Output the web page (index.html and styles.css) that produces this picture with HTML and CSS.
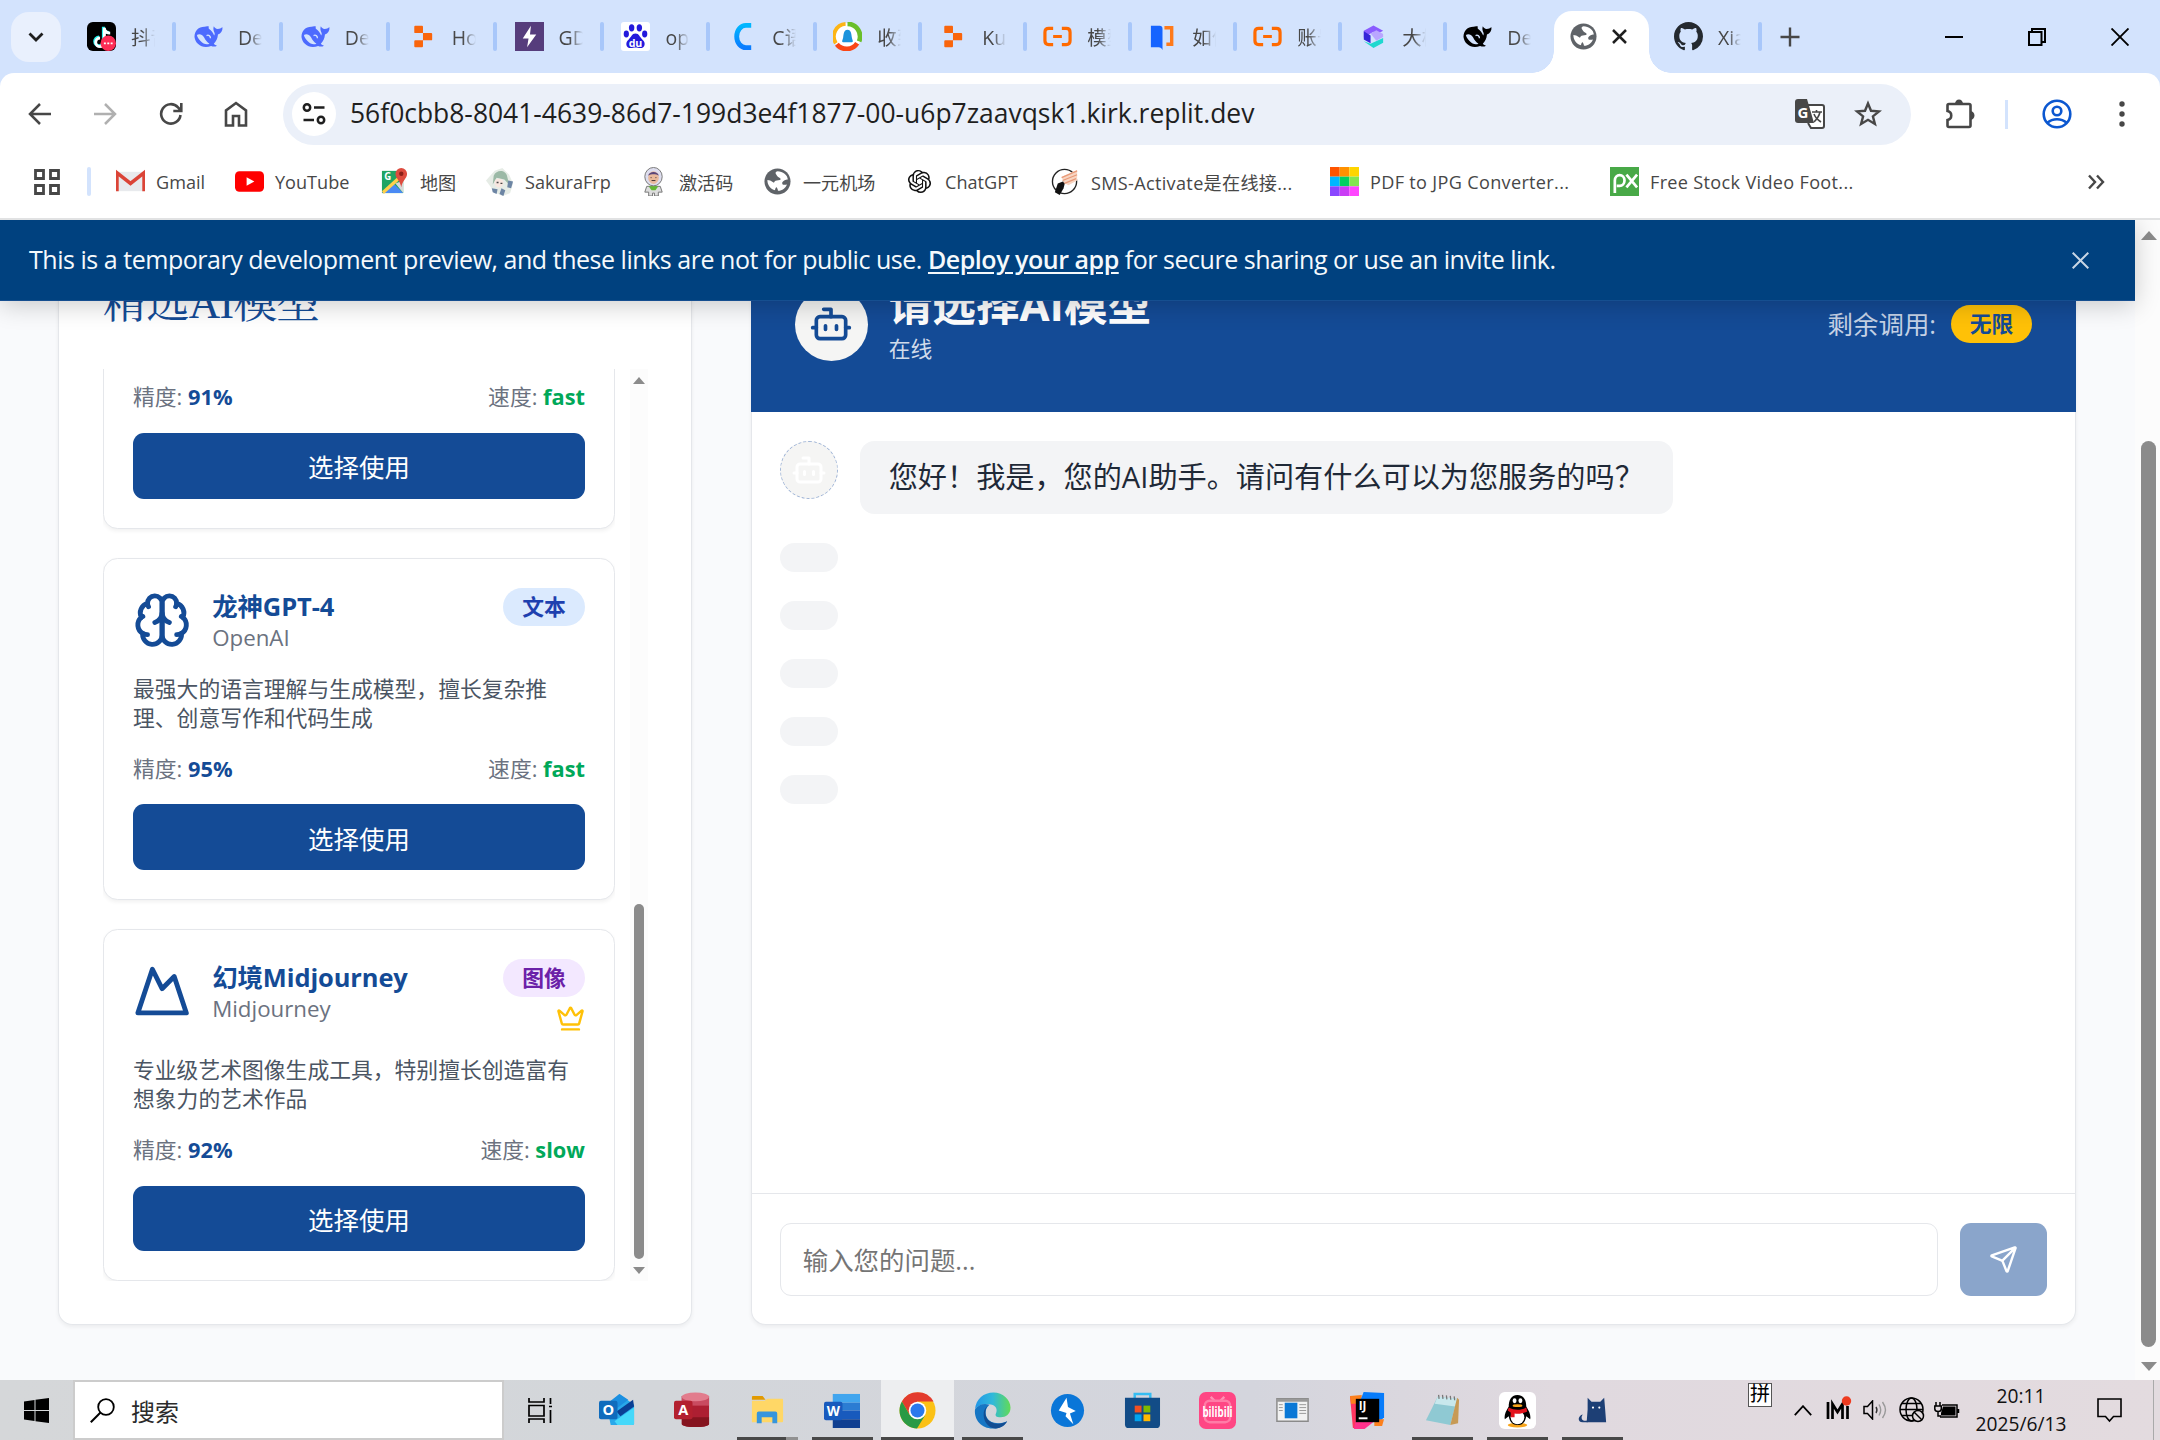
FILE: index.html
```html
<!DOCTYPE html>
<html lang="zh-CN">
<head>
<meta charset="utf-8">
<title>AI模型</title>
<link rel="stylesheet" href="styles.css">
</head>
<body>
<svg class="defs" aria-hidden="true">
  <defs>
    <symbol id="whale" viewBox="0 0 30 30"><path d="M.5 15.500C.5 9 5 4.800 11 5c1.500-.8 3.500-.8 4.500-.2-.5.700-.5 1.700.2 2.400 2.300 1.500 4 3.800 5.200 6.800.8-1.500.7-2.500-.2-4C19.800 8 20 6 20.500 4.500c.7 1.500 2 2.700 4 2.700 2 0 3.500-.8 5-1.700.2 3.500-1.500 6.500-4.700 7.500-.5 4.500-1.800 7-4.300 9.500 1 1.200 2 1.500 3.200 2-1.700 1.200-4.200 1-6 .2C9 28 1.500 23 .5 15.500z" fill="currentColor"/><path d="M3 13.500c2.500-1.800 5.500-.5 7.500 2.500 1.500 2.700 3 5 5.500 6.500-3 1.500-6.500.2-9-2.500C5 18 3.500 16 3 13.500z" fill="#d3e3fd"/><path d="M13 14c2-1 4 .3 4 2.800" fill="none" stroke="#d3e3fd" stroke-width="1.400"/></symbol>
    <symbol id="replit" viewBox="0 0 30 30"><path d="M7.500 4h7q1 0 1 1v6.500h-8q-1 0-1-1V5q0-1 1-1zM15.500 11.500H24q1 0 1 1V18q0 1-1 1h-8.500zM7.500 19h8v6q0 1-1 1h-7q-1 0-1-1v-5q0-1 1-1z" fill="#f9650c"/></symbol>
    <symbol id="bracket" viewBox="0 0 30 30"><path d="M10.500 6.500H6Q2 6.500 2 10.500v9q0 4 4 4h4.500M19.500 6.500H24q4 0 4 4v9q0 4-4 4h-4.500M10.500 15h9" fill="none" stroke="#ff6a00" stroke-width="3.300"/></symbol>
    <symbol id="globe" viewBox="0 0 28 28"><circle cx="14" cy="14" r="13.500" fill="#5f6368"/><path d="M14 3.300c2.200.7 2.500 1.700 1.500 3.200s-1.500 2.700-3.500 3.500c-1.500.7-1.500 2-.5 2.500 2 .7 4.500 0 5.500 1.500s1.500 4-.5 5-2.500 2-3 4.500c-4 .2-8-2.500-9.300-6.500 1.800.5 4 .7 4.800-.5.500-1.500-.5-2.500-2-3.500-1.500-.8-2.500-1-3.700-1C3.500 7 8.500 3.500 14 3.300z" fill="#fff" transform="matrix(-1 0 0 1 28 0)"/><path d="M3.500 12.500c2 .2 4 .8 5.500 2 2 1.500 5 .5 5 3 0 2-2.500 2.500-2.500 5.500C7 22 3.500 18 3.500 12.500z" fill="#fff"/></symbol>
    <symbol id="bot" viewBox="0 0 24 24"><g fill="none" stroke="currentColor" stroke-width="2" stroke-linecap="round" stroke-linejoin="round"><path d="M12 8V4H8M2 14h2M20 14h2M15 13v2M9 13v2"/><rect x="4" y="8" width="16" height="12" rx="2"/></g></symbol>
  </defs>
</svg>

<div class="browser">
  <header class="tabstrip">
    <button class="tab-search"><svg width="16" height="12" viewBox="0 0 16 12"><path d="M1.500 2.500 8 9l6.500-6.500" fill="none" stroke="#1f1f1f" stroke-width="2.800"/></svg></button>
    <div class="tabs">
      <div class="tab"><svg class="fav" viewBox="0 0 30 30"><rect width="30" height="30" rx="6" fill="#000"/><path d="M17 5v15a4.500 4.500 0 1 1-4.500-4.500M17 6c.5 3 2.500 5 6 5" fill="none" stroke="#25f4ee" stroke-width="3.200"/><path d="M18 6v15a4.500 4.500 0 1 1-4.500-4.500M18 7c.5 3 2.500 4.500 6 4.500" fill="none" stroke="#fff" stroke-width="3"/><circle cx="22" cy="22" r="8" fill="#fe2c55"/><path d="M17.500 22h2M21 22h2M24.500 22h2" stroke="#fff" stroke-width="1.800"/></svg><span class="tab-name">抖音</span></div>
      <div class="tab"><svg class="fav blue-whale"><use href="#whale"/></svg><span class="tab-name">Dee</span></div>
      <div class="tab"><svg class="fav blue-whale"><use href="#whale"/></svg><span class="tab-name">Dee</span></div>
      <div class="tab"><svg class="fav"><use href="#replit"/></svg><span class="tab-name">Hom</span></div>
      <div class="tab"><svg class="fav" viewBox="0 0 30 30"><rect width="30" height="30" fill="#563d7c"/><path d="M16.500 4 8 17h6l-1.500 9L22 13h-6.500z" fill="#fff"/></svg><span class="tab-name">GDP</span></div>
      <div class="tab"><svg class="fav" viewBox="0 0 30 30"><rect width="30" height="30" rx="3" fill="#fff"/><g fill="#2319dc"><ellipse cx="5.500" cy="12.500" rx="2.700" ry="3.600"/><ellipse cx="11" cy="6" rx="2.800" ry="3.800"/><ellipse cx="19" cy="6" rx="2.800" ry="3.800"/><ellipse cx="24.500" cy="12.500" rx="2.700" ry="3.600"/><path d="M15 12c4 0 4 3.500 7 6 4 3 3 9-2 9-2 0-3-.5-5-.5s-3 .5-5 .5c-5 0-6-6-2-9 3-2.500 3-6 7-6z"/></g><text x="15" y="25.500" font-size="11" text-anchor="middle" class="icon-text" fill="#fff">du</text></svg><span class="tab-name">ope</span></div>
      <div class="tab"><svg class="fav" viewBox="0 0 30 30"><defs><linearGradient id="cg" x2="0" y2="1"><stop stop-color="#00b7ff"/><stop offset="1" stop-color="#0a7cff"/></linearGradient></defs><path d="M24 3.500h-5.500a9.500 11.500 0 0 0 0 23H24" fill="none" stroke="url(#cg)" stroke-width="5"/></svg><span class="tab-name">C语言</span></div>
      <div class="tab"><svg class="fav" viewBox="0 0 30 30"><circle cx="15" cy="15" r="14" fill="#fff"/><path d="M13 2A13 13 0 0 0 3 22" fill="none" stroke="#fdb515" stroke-width="4"/><path d="M15 2a13 13 0 0 1 12 18" fill="none" stroke="#6abf2a" stroke-width="5"/><path d="M4 23a13 13 0 0 0 21-1" fill="none" stroke="#fa4616" stroke-width="5"/><path d="M15 8c4 0 4 5 4.500 8s2.500 5-1 5h-7c-3.500 0-1.500-2-1-5S11 8 15 8z" fill="#1c93dc"/></svg><span class="tab-name">收到</span></div>
      <div class="tab"><svg class="fav"><use href="#replit"/></svg><span class="tab-name">Kun</span></div>
      <div class="tab"><svg class="fav"><use href="#bracket"/></svg><span class="tab-name">模型</span></div>
      <div class="tab"><svg class="fav" viewBox="0 0 30 30"><path d="M3 4h9q3 0 3 3v22q-1-3-4-3H3z" fill="#1664ff"/><path d="M17 6h7.500v17H19" fill="none" stroke="#ff7a1a" stroke-width="3.500"/></svg><span class="tab-name">如何</span></div>
      <div class="tab"><svg class="fav"><use href="#bracket"/></svg><span class="tab-name">账号</span></div>
      <div class="tab"><svg class="fav" viewBox="0 0 30 30"><path d="M16 3.500 26 9l-7 4-3-3-10 6V9z" fill="#8a5cff"/><path d="M6 9.500 13 14v8l-7-4z" fill="#3426d8"/><path d="m13 12 6-3.500 7 4v3l-7 4z" fill="#b9a6ff"/><path d="m6 20 7 2.500 13-6v5L16 27z" fill="#1fd8cf"/></svg><span class="tab-name">大模</span></div>
      <div class="tab no-sep"><svg class="fav black-whale"><use href="#whale"/></svg><span class="tab-name">Dee</span></div>
    </div>
    <div class="tab-active"><svg width="27" height="27"><use href="#globe"/></svg><svg width="15" height="15" viewBox="0 0 15 15"><path d="m1 1 13 13M14 1 1 14" stroke="#1f1f1f" stroke-width="2.500"/></svg></div>
    <div class="tab tab-last"><svg class="fav" viewBox="0 0 16 16"><path fill="#24292f" d="M8 0C3.580 0 0 3.580 0 8c0 3.540 2.290 6.530 5.470 7.590.4.070.55-.17.55-.38 0-.19-.01-.82-.01-1.490-2.010.37-2.530-.49-2.690-.94-.09-.23-.48-.94-.82-1.130-.28-.15-.68-.52-.01-.53.63-.01 1.080.58 1.230.82.72 1.210 1.870.87 2.330.66.07-.52.28-.87.51-1.070-1.780-.2-3.640-.89-3.640-3.950 0-.87.31-1.590.82-2.150-.08-.2-.36-1.020.08-2.120 0 0 .67-.21 2.200.82.64-.18 1.320-.27 2-.27s1.360.09 2 .27c1.530-1.040 2.200-.82 2.200-.82.44 1.100.16 1.920.08 2.120.51.56.82 1.270.82 2.150 0 3.070-1.870 3.750-3.650 3.950.29.25.54.73.54 1.480 0 1.070-.01 1.930-.01 2.200 0 .21.15.46.55.38A8.013 8.013 0 0 0 16 8c0-4.420-3.580-8-8-8z"/></svg><span class="tab-name">Xiao</span></div>
    <svg class="new-tab" width="20" height="20" viewBox="0 0 20 20"><path d="M10 .5v19M.5 10h19" stroke="#474747" stroke-width="2.400"/></svg>
    <div class="win-controls">
      <svg width="18" height="18" viewBox="0 0 18 18"><path d="M0 9h18" stroke="#000" stroke-width="2"/></svg>
      <svg width="18" height="18" viewBox="0 0 18 18"><path d="M1 4h12.500v13H1zM4 4V1h13v13h-3.500" fill="none" stroke="#000" stroke-width="2"/></svg>
      <svg width="18" height="18" viewBox="0 0 18 18"><path d="m.5.5 17 17M17.500.5l-17 17" stroke="#000" stroke-width="1.900"/></svg>
    </div>
  </header>

  <div class="toolbar">
    <div class="nav-icons">
      <svg width="24" height="24" viewBox="0 0 24 24"><path d="M23 12H2.500M12 2 2 12l10 10" fill="none" stroke="#474747" stroke-width="2.500"/></svg>
      <svg width="24" height="24" viewBox="0 0 24 24"><path d="M1 12h20.500M12 2l10 10-10 10" fill="none" stroke="#b0b0b0" stroke-width="2.500"/></svg>
      <svg width="24" height="24" viewBox="0 0 24 24"><path d="M21.500 13A9.700 9.700 0 1 1 19 5.300L22 8.500M22.300 1v8h-8" fill="none" stroke="#474747" stroke-width="2.600"/></svg>
      <svg width="24" height="26" viewBox="0 0 24 26"><path d="M2 24.500V9.500L12 2l10 7.500v15h-7V15H9v9.500z" fill="none" stroke="#474747" stroke-width="2.600"/></svg>
    </div>
    <div class="omnibox">
      <span class="site-info"><svg width="24" height="22" viewBox="0 0 24 22"><g fill="none" stroke="#1f1f1f" stroke-width="2.500"><circle cx="5" cy="4.500" r="3.200"/><path d="M12 4.500h10.500M1.500 17H12"/><circle cx="19" cy="17" r="3.200"/></g></svg></span>
      <span class="url">56f0cbb8-8041-4639-86d7-199d3e4f1877-00-u6p7zaavqsk1.kirk.replit.dev</span>
      <svg class="translate" width="30" height="30" viewBox="0 0 30 30"><path d="M13 6h14q2 0 2 2v19q0 2-2 2H16l-3-5" fill="#fff" stroke="#474747" stroke-width="2"/><path d="M3 0h9l7 24H3q-3 0-3-3V3q0-3 3-3z" fill="#474747"/><text x="8" y="18.500" font-size="15" text-anchor="middle" class="icon-text" fill="#fff">G</text><path d="M17 13h10M21.500 11v2M25 13c-1 5-4 8-6 10M19 15c1 3 4 6 7 8" fill="none" stroke="#474747" stroke-width="1.600"/></svg>
      <svg width="28" height="28" viewBox="0 0 28 28"><path d="m14 3.500 3 7.300 8 .6-6.100 5 2 7.600-6.900-4.200L7.100 24l2-7.600-6.100-5 8-.6z" fill="none" stroke="#474747" stroke-width="2.400"/></svg>
    </div>
    <svg class="ext" width="30" height="30" viewBox="0 0 30 30"><path d="M4 5h20q1.500 0 1.500 1.500v20q0 1.500-1.500 1.500H4q-1.500 0-1.500-1.500V21c5-1 5-8 0-9V6.500Q2.500 5 4 5z" fill="none" stroke="#474747" stroke-width="2.600"/><path d="M10 5a4 4.500 0 0 1 8 0zM25 12a4.500 4.500 0 0 1 0 9z" fill="#474747"/></svg>
    <i class="tool-sep"></i>
    <svg class="profile" width="30" height="30" viewBox="0 0 30 30"><g fill="none" stroke="#0b57d0" stroke-width="2.600"><circle cx="15" cy="15" r="13.300"/><circle cx="15" cy="12" r="4.300"/><path d="M5 24c6-5 14-5 20 0"/></g></svg>
    <svg class="dots" width="6" height="26" viewBox="0 0 6 26"><g fill="#474747"><circle cx="3" cy="3" r="2.700"/><circle cx="3" cy="13" r="2.700"/><circle cx="3" cy="23" r="2.700"/></g></svg>
  </div>

  <nav class="bookmarks">
    <svg class="apps" width="26" height="26" viewBox="0 0 26 26"><path d="M1.500 1.500h8v8h-8zM16.500 1.500h8v8h-8zM1.500 16.500h8v8h-8zM16.500 16.500h8v8h-8z" fill="none" stroke="#474747" stroke-width="2.800"/></svg>
    <i class="bm-sep"></i>
    <div class="bm w119"><svg viewBox="0 0 30 30"><path d="M1 5h28v20H1z" fill="#e8eaed"/><path d="M1 25V6l14 11L29 6v19" fill="none" stroke="#db4437" stroke-width="3.600"/></svg><span>Gmail</span></div>
    <div class="bm w145"><svg viewBox="0 0 30 30"><rect y="4.500" width="30" height="21" rx="4.500" fill="red"/><path d="m12 10.500 8 4.500-8 4.500z" fill="#fff"/></svg><span>YouTube</span></div>
    <div class="bm w105"><svg viewBox="0 0 30 30"><path d="M2 4h22v23H2z" fill="#1fa463"/><path d="m2 27 11-11 11 11z" fill="#4a8af4"/><path d="m2 25 20-18 3 2L4 28z" fill="#ffd04b"/><path d="m24 14-8 3 8 10z" fill="#d8d8d8"/><path d="M22 1a6 6 0 0 1 6 6c0 5-5 7-6 14-1-7-6-9-6-14a6 6 0 0 1 6-6z" fill="#dd4b3e"/><circle cx="22" cy="7" r="2.300" fill="#8c2018"/><text x="8" y="13" font-size="10" text-anchor="middle" class="icon-text" fill="#fff">G</text></svg><span>地图</span></div>
    <div class="bm w156"><svg viewBox="0 0 30 30"><path d="M1 14 10 4l8-3 7 7 4 9-3 10-8 3-8-4z" fill="#e6ece6"/><path d="M9 9c3-7 13-6 14 1l2 8-5-5-8-2-4 7z" fill="#9bb9a6"/><path d="M11 13c4-2 8 0 8 3s-3 6-6 5-4-6-2-8z" fill="#f8e6df"/><path d="m7 22 6 1-1 5-4-2zM24 14l5 1-2 7-4-1zM17 22l4 2-2 6-4-2z" fill="#6d85a4"/><path d="M12 16h2M16 17h2" stroke="#444" stroke-width="1.400"/></svg><span>SakuraFrp</span></div>
    <div class="bm w124"><svg viewBox="0 0 30 30"><ellipse cx="15" cy="10" rx="9" ry="9.500" fill="#dde" stroke="#777"/><ellipse cx="15" cy="11" rx="5.500" ry="6.500" fill="#e9b99c"/><path d="M9.500 9c1-5 10-5 11 0-3-2-8-2-11 0z" fill="#58457b"/><path d="M8 20h14l2 6h-4v4h-4v-3h-2v3h-4v-4H6z" fill="#ddd" stroke="#777"/><path d="M10 20h10l-3 4h-4z" fill="#63b832"/><path d="M12 11h1M17 11h1M13 14h4" stroke="#433"/></svg><span>激活码</span></div>
    <div class="bm w141"><svg class="pad"><use href="#globe"/></svg><span>一元机场</span></div>
    <div class="bm w146"><svg viewBox="-3 -3 30 30"><path fill="#111" d="M22.282 9.821a5.985 5.985 0 0 0-.516-4.910 6.046 6.046 0 0 0-6.510-2.900A6.065 6.065 0 0 0 4.981 4.182a5.985 5.985 0 0 0-3.998 2.900 6.046 6.046 0 0 0 .743 7.097 5.980 5.980 0 0 0 .511 4.910 6.051 6.051 0 0 0 6.515 2.900A5.985 5.985 0 0 0 13.260 24a6.056 6.056 0 0 0 5.772-4.206 5.989 5.989 0 0 0 3.998-2.900 6.056 6.056 0 0 0-.748-7.073zm-9.022 12.608a4.476 4.476 0 0 1-2.876-1.041l.142-.08 4.778-2.758a.795.795 0 0 0 .393-.681v-6.737l2.020 1.169a.071.071 0 0 1 .038.052v5.583a4.504 4.504 0 0 1-4.495 4.494zm-9.661-4.125a4.471 4.471 0 0 1-.535-3.014l.142.085 4.783 2.758a.771.771 0 0 0 .781 0l5.843-3.369v2.332a.08.08 0 0 1-.033.062L9.740 19.950a4.499 4.499 0 0 1-6.141-1.646zM2.341 7.896a4.485 4.485 0 0 1 2.366-1.973V11.600a.766.766 0 0 0 .388.677l5.814 3.354-2.020 1.169a.076.076 0 0 1-.071 0l-4.830-2.787A4.504 4.504 0 0 1 2.341 7.872zm16.596 3.856L13.104 8.364 15.119 7.200a.076.076 0 0 1 .071 0l4.830 2.791a4.494 4.494 0 0 1-.677 8.104v-5.677a.790.790 0 0 0-.407-.667zm2.011-3.023-.142-.085-4.774-2.782a.776.776 0 0 0-.785 0L9.409 9.230V6.897a.066.066 0 0 1 .028-.062l4.830-2.787a4.499 4.499 0 0 1 6.680 4.660zM8.307 12.863l-2.020-1.164a.08.08 0 0 1-.038-.057V6.074a4.499 4.499 0 0 1 7.376-3.454l-.142.081L8.704 5.459a.795.795 0 0 0-.393.681zm1.098-2.365 2.602-1.500 2.607 1.500v2.999l-2.597 1.500-2.607-1.500z"/></svg><span>ChatGPT</span></div>
    <div class="bm w278"><svg viewBox="0 0 30 30"><circle cx="14" cy="15" r="12.500" fill="#fff" stroke="#222" stroke-width="1.400"/><path d="m4 26 3-9 8-3-2 8-4 7z" fill="#111"/><path d="m11 10 16-7v11l-9 5-5-3z" fill="#f8d5c2"/><path d="m11 11 16-7M12 14l15-6M14 17l12-5" stroke="#e89a78" stroke-width="1.300"/></svg><span class="ls-wide">SMS-Activate是在线接...</span></div>
    <div class="bm w280"><svg viewBox="0 0 30 30"><path d="M0 0h10v10H0z" fill="#ff5400"/><path d="M10 0h10v10H10z" fill="#ff9100"/><path d="M20 0h10v10H20z" fill="#ffd500"/><path d="M0 10h10v10H0z" fill="#00b8ff"/><path d="M10 10h10v10H10z" fill="#00d062"/><path d="M20 10h10v10H20z" fill="#84e650"/><path d="M0 20h10v10H0z" fill="#8a46ff"/><path d="M10 20h10v10H10z" fill="#c93df5"/><path d="M20 20h10v10H20z" fill="#ff46ff"/></svg><span class="ls-wide">PDF to JPG Converter...</span></div>
    <div class="bm w260"><svg viewBox="0 0 30 30"><path d="M0 0h30v30H0z" fill="#48a947"/><g fill="none" stroke="#fff" stroke-width="2.800"><path d="M5 27V14a5 5.500 0 1 1 5 5.500H7"/><path d="m17 8 11 13M28 8 17 21"/></g></svg><span class="ls-wide">Free Stock Video Foot...</span></div>
    <svg class="more" width="18" height="16" viewBox="0 0 18 16"><path d="m2 1.500 6 6.500-6 6.500M10 1.500l6 6.500-6 6.500" fill="none" stroke="#474747" stroke-width="2.400"/></svg>
  </nav>

  <main class="viewport">
    <div class="page">
      <aside class="sidebar">
        <h2 class="side-title">精选AI模型</h2>
        <div class="list-wrap">
          <div class="list">
            <article class="card card-cut">
              <div class="stats"><span>精度: <b>91%</b></span><span>速度: <b class="green">fast</b></span></div>
              <button class="choose">选择使用</button>
            </article>
            <article class="card">
              <div class="card-head">
                <svg class="card-icon" viewBox="0 0 24 24"><path d="M12 5a3 3 0 1 0-5.997.125 4 4 0 0 0-2.526 5.770 4 4 0 0 0 .556 6.588A4 4 0 1 0 12 18Z"/><path d="M12 5a3 3 0 1 1 5.997.125 4 4 0 0 1 2.526 5.770 4 4 0 0 1-.556 6.588A4 4 0 1 1 12 18Z"/><path d="M15 13a4.500 4.500 0 0 1-3-4 4.500 4.500 0 0 1-3 4M17.599 6.500a3 3 0 0 0 .399-1.375M6.003 5.125A3 3 0 0 0 6.401 6.500M3.477 10.896a4 4 0 0 1 .585-.396M19.938 10.500a4 4 0 0 1 .585.396M6 18a4 4 0 0 1-1.967-.516M19.967 17.484A4 4 0 0 1 18 18"/></svg>
                <div class="card-names"><h3>龙神GPT-4</h3><p>OpenAI</p></div>
                <div class="card-tags"><span class="tag tag-blue">文本</span></div>
              </div>
              <p class="desc">最强大的语言理解与生成模型，擅长复杂推理、创意写作和代码生成</p>
              <div class="stats"><span>精度: <b>95%</b></span><span>速度: <b class="green">fast</b></span></div>
              <button class="choose">选择使用</button>
            </article>
            <article class="card">
              <div class="card-head">
                <svg class="card-icon" viewBox="0 0 24 24"><path d="m8 3 4 8 5-5 5 15H2L8 3z"/></svg>
                <div class="card-names"><h3>幻境Midjourney</h3><p>Midjourney</p></div>
                <div class="card-tags"><span class="tag tag-purple">图像</span><svg class="crown" viewBox="0 0 24 24"><path d="M11.562 3.266a.5.5 0 0 1 .876 0L15.390 8.870a1 1 0 0 0 1.516.294L21.183 5.500a.5.5 0 0 1 .798.519l-2.834 10.246a1 1 0 0 1-.956.734H5.810a1 1 0 0 1-.957-.734L2.020 6.020a.5.5 0 0 1 .798-.519l4.276 3.664a1 1 0 0 0 1.516-.294zM5 21h14"/></svg></div>
              </div>
              <p class="desc">专业级艺术图像生成工具，特别擅长创造富有想象力的艺术作品</p>
              <div class="stats"><span>精度: <b>92%</b></span><span>速度: <b class="green">slow</b></span></div>
              <button class="choose">选择使用</button>
            </article>
          </div>
          <div class="scroll-small"><i class="up"></i><i class="thumb"></i><i class="down"></i></div>
        </div>
      </aside>

      <section class="chat">
        <div class="chat-head">
          <span class="avatar-lg"><svg width="44" height="44"><use href="#bot"/></svg></span>
          <div class="chat-names"><h2>请选择AI模型</h2><p>在线</p></div>
          <div class="quota"><span>剩余调用:</span><b>无限</b></div>
        </div>
        <div class="messages">
          <div class="msg"><span class="avatar-sm"><svg width="36" height="36"><use href="#bot"/></svg></span><p class="bubble">您好！我是，您的AI助手。请问有什么可以为您服务的吗？</p></div>
          <i class="pill"></i><i class="pill"></i><i class="pill"></i><i class="pill"></i><i class="pill"></i>
        </div>
        <div class="composer">
          <div class="input">输入您的问题...</div>
          <button class="send"><svg width="29" height="29" viewBox="0 0 24 24"><path d="M14.536 21.686a.5.5 0 0 0 .937-.024l6.500-19a.496.496 0 0 0-.635-.635l-19 6.500a.5.5 0 0 0-.024.937l7.930 3.180a2 2 0 0 1 1.112 1.110zM21.854 2.147l-10.940 10.939" fill="none" stroke="#fff" stroke-width="2" stroke-linecap="round" stroke-linejoin="round"/></svg></button>
        </div>
      </section>
    </div>
    <div class="scroll-page"><i class="up"></i><i class="thumb"></i><i class="down"></i></div>
    <div class="banner"><p>This is a temporary development preview, and these links are not for public use. <a>Deploy your app</a> for secure sharing or use an invite link.</p><svg width="17" height="17" viewBox="0 0 17 17"><path d="m.7.7 15.600 15.600M16.300.7.7 16.300" stroke="#c8d6e5" stroke-width="2"/></svg></div>
  </main>

  <footer class="taskbar">
    <span class="start"><svg width="25" height="25" viewBox="0 0 25 25"><path d="M0 3.500 10.500 2v10H0zM11.500 1.800 25 0v12H11.500zM0 13h10.500v10L0 21.500zM11.500 13H25v12l-13.500-1.800z"/></svg></span>
    <div class="search"><svg width="25" height="25" viewBox="0 0 25 25"><circle cx="16" cy="9" r="7.800" fill="none" stroke="#000" stroke-width="1.800"/><path d="M10.500 14.500.8 24.200" stroke="#000" stroke-width="2"/></svg><span>搜索</span></div>
    <div class="apps-row">
      <span class="app"><svg width="25" height="25" viewBox="0 0 25 25"><path d="M1 0v4h15V0M1 7.500h15v10.500H1zM1 25v-4h15v4M22.500 0v6M22.500 12v13M21 8.500h3" fill="none" stroke="#000" stroke-width="1.700"/></svg></span>
      <span class="app"><svg viewBox="0 0 38 38"><path d="m8 14 13-12 15 11v19q0 2-2 2H12z" fill="#28a8ea"/><path d="m12 9 9-7 9 6-16 12z" fill="#1b8fe0"/><path d="m18 20 17-12 1 7-14 10z" fill="#0a3f94"/><path d="m36 16-20 14 3 4h15q2 0 2-2z" fill="#45d8fa"/><rect y="9" width="19" height="19" rx="2" fill="#0f6cbd"/><text x="9.500" y="24" font-size="15" text-anchor="middle" class="icon-text" fill="#fff">O</text></svg></span>
      <span class="app"><svg viewBox="0 0 38 38"><path d="M8 4v29c2 4 26 4 28 0V4z" fill="#ad1f32"/><path d="M8 26h28v7c-2 4-26 4-28 0z" fill="#85141f"/><path d="M8 4v10h28V4z" fill="#c94b60"/><ellipse cx="22" cy="5" rx="14" ry="4.500" fill="#e27c8d"/><rect y="9" width="19" height="19" rx="2" fill="#b3202f"/><text x="9.500" y="24" font-size="15" text-anchor="middle" class="icon-text" fill="#fff">A</text></svg></span>
      <span class="app running wide"><svg viewBox="0 0 38 38"><path d="M3 5q0-1 1-1h10l3 4H3z" fill="#e29a00"/><path d="M3 9h13l3-2h15q1 0 1 1v22q0 1-1 1H3z" fill="#ffd766"/><path d="M8 32V22q0-2 2-2h17q2 0 2 2v10h-5v-6H13v6z" fill="#3695dc"/></svg></span>
      <span class="app running"><svg viewBox="0 0 38 38"><path d="M9 2h28v9H9z" fill="#41a5ee"/><path d="M9 11h28v8H9z" fill="#2b7cd3"/><path d="M9 19h28v9H9z" fill="#185abd"/><path d="M9 28h28v9H9z" fill="#103f91"/><rect y="10" width="19" height="19" rx="2" fill="#185abd"/><text x="9.500" y="24.500" font-size="14" text-anchor="middle" class="icon-text" fill="#fff">W</text></svg></span>
      <span class="app running active"><svg viewBox="0 0 38 38"><circle cx="19" cy="19" r="18.500" fill="#fbc116"/><path d="M3 9.800a18.500 18.500 0 0 1 32.500 0H19l-8 13.500z" fill="#e33b2e"/><path d="M3 9.800 11 23.500l8 4 7.500-3L18.500 37.500A18.500 18.500 0 0 1 3 9.800z" fill="#2a9a45"/><circle cx="19" cy="19" r="9" fill="#fff"/><circle cx="19" cy="19" r="7.200" fill="#2b79ec"/></svg></span>
      <span class="app running"><svg viewBox="0 0 38 38"><defs><linearGradient id="eg"><stop stop-color="#2196e8"/><stop offset=".5" stop-color="#30b9da"/><stop offset="1" stop-color="#62db55"/></linearGradient></defs><path d="M1 18C2 7 10 .5 20 .5S37.500 8 37.500 16c0 7-5 10-10 10s-6-2-5-4 2-7-4-9C12 11 4 13 1 18z" fill="url(#eg)"/><path d="M1 18c3-5 9-7 15-5-4 3-5 8-3 13 3 6 12 8 21 4-3 5-8 8-15 7.500C8 37.500 0 29 1 18z" fill="#1676c4"/><path d="M14 14c-4 5-3 14 4 17 6 3 12 1 16-1-2 4-6 7-12 7.500C14 37 9 29 10 21c.5-3 2-5 4-7z" fill="#124d92"/></svg></span>
      <span class="app"><svg viewBox="0 0 38 38"><circle cx="19" cy="19" r="17" fill="#0a76d8"/><path d="m18 6-8 13 8 2.500-1 3.500 8 8-3.500-11 6-2.500-8-4z" fill="#fff"/></svg></span>
      <span class="app"><svg viewBox="0 0 38 38"><path d="M11 9V2h16v7" fill="none" stroke="#35bdf2" stroke-width="2.500"/><path d="M1 6h36v27q0 4-4 4H5q-4 0-4-4z" fill="#124c87"/><path d="M11 14h7v7h-7z" fill="#f25022"/><path d="M20 14h7v7h-7z" fill="#7fba00"/><path d="M11 23h7v7h-7z" fill="#00a4ef"/><path d="M20 23h7v7h-7z" fill="#ffb900"/></svg></span>
      <span class="app"><svg viewBox="0 0 38 38"><rect width="38" height="38" rx="7" fill="#ff4684"/><path d="M12 5l4 4M26 5l-4 4" stroke="#ff91b4" stroke-width="2.500"/><rect x="6" y="9" width="26" height="22" rx="5" fill="none" stroke="#ff7ba6" stroke-width="2.500"/><text x="19" y="25.500" font-size="15" text-anchor="middle" textLength="31" lengthAdjust="spacingAndGlyphs" class="icon-text" fill="#fff">bilibili</text></svg></span>
      <span class="app"><svg viewBox="0 0 38 38"><path d="M3 7h32v23H3z" fill="#f2f2f2" stroke="#8a8a8a" stroke-width="1.500"/><path d="M3 7h32v3H3z" fill="#999"/><path d="M11 11h13v16H11z" fill="#0a78d6"/><path d="M5 13h4M5 16h4M5 19h4M26 13h7M26 16h7M26 19h7M26 22h7" stroke="#999"/></svg></span>
      <span class="app"><svg viewBox="0 0 38 38"><path d="m1 4 9 2-2 31H4z" fill="#ff3560"/><path d="m1 4 12-1v9H2z" fill="#fc801d"/><path d="m15 0 21 1v25l-6 6L12 8z" fill="#087cfa"/><path d="m8 25 18 5-10 8H5z" fill="#ff318c"/><path d="M26 28h10l-2 7h-8z" fill="#fc801d"/><path d="M7 7h24v24H7z"/><text x="10" y="18.500" font-size="12" class="icon-text" fill="#fff">IJ</text><path d="M10 27h9" stroke="#fff" stroke-width="2"/></svg></span>
      <span class="app running"><svg viewBox="0 0 38 38"><path d="m14 5 20 2-7 27L2 29z" fill="#8fc9d3"/><path d="m14 5 20 2-2 8-21-3z" fill="#c8e8ed"/><path d="m34 6 2 2-1 24-8 2z" fill="#c79a55"/><path d="m15 3 .5 4M19 3l.5 4M23 3.500l.5 4M27 4l.5 4M31 4.500l.5 4" stroke="#777" stroke-width="1.300"/></svg></span>
      <span class="app running"><svg viewBox="0 0 38 38"><rect width="38" height="38" rx="6" fill="#fff"/><ellipse cx="19" cy="34" rx="10" ry="2.500" fill="#f8a51b"/><path d="M19 3c7 0 9 6 9 12 3 5 5 9 4 13l-4-3c-1 6-4 9-9 9s-8-3-9-9l-4 3c-1-4 1-8 4-13 0-6 2-12 9-12z"/><ellipse cx="19" cy="26" rx="7" ry="7" fill="#fff"/><path d="M10 16c6 3 12 3 18 0l1 4c-4 2-9 3-13 2v4h-4v-5l-3-2z" fill="#e3131c"/><ellipse cx="16" cy="9" rx="2" ry="2.500" fill="#fff"/><ellipse cx="22" cy="9" rx="2" ry="2.500" fill="#fff"/><ellipse cx="19" cy="14" rx="5" ry="1.500" fill="#f8a51b"/></svg></span>
      <span class="app running"><svg viewBox="0 0 38 38"><path d="m14 6 4 4h9l4-4 1 12 1 13H13l1-13z" fill="#1d3f75"/><path d="M14 29c-5 2-8-2-5-6-5 1-6 8 0 8h5z" fill="#1d3f75"/><circle cx="19.500" cy="16" r="1.100" fill="#fff"/><circle cx="26" cy="16" r="1.100" fill="#fff"/></svg></span>
    </div>
    <div class="tray">
      <span class="ime">拼</span>
      <svg class="t-chev" width="18" height="11" viewBox="0 0 18 11"><path d="m.8 10.200 8.200-9 8.200 9" fill="none" stroke="#000" stroke-width="1.800"/></svg>
      <svg class="t-mi" width="26" height="25" viewBox="0 0 26 25"><path d="M2 6v17M6.500 23V8l5 8 5-8v15M21.500 10v13" fill="none" stroke="#000" stroke-width="2.700"/><circle cx="20.500" cy="5" r="4.700" fill="#ee3b20"/></svg>
      <svg class="t-vol" width="24" height="20" viewBox="0 0 24 20"><path d="M1 6.500h3.500L9.500 1v18l-5-5.500H1z" fill="none" stroke="#000" stroke-width="1.500"/><path d="M13 7c1.300 2 1.300 4 0 6" fill="none" stroke="#333" stroke-width="1.400"/><path d="M16 4.500c2.500 4 2.500 7 0 11M19.500 2c4 6 4 10 0 16" fill="none" stroke="#999" stroke-width="1.400"/></svg>
      <svg class="t-net" width="26" height="26" viewBox="0 0 26 26"><g fill="none" stroke="#000" stroke-width="1.500"><circle cx="12.500" cy="12.500" r="11.500"/><ellipse cx="12.500" cy="12.500" rx="5.500" ry="11.500"/><path d="M1 12.500h23M3 6.500h19M3 18.500h19"/></g><circle cx="19" cy="19" r="5.500" fill="#e2dade" stroke="#000" stroke-width="1.500"/><path d="m15 15 8 8" stroke="#000" stroke-width="1.500"/></svg>
      <svg class="t-bat" width="26" height="18" viewBox="0 0 26 18"><path d="M2 1v4M6 1v4M.8 5h6.500v3q0 2.500-3.200 2.500T.8 8zM4 10v5h3" fill="none" stroke="#000" stroke-width="1.500"/><path d="M8 4h15v12H6M24.500 8v4" fill="none" stroke="#000" stroke-width="1.500"/><path d="M9 5.500h12.500v9H7V12z"/></svg>
      <div class="clock"><span>20:11</span><span>2025/6/13</span></div>
      <svg class="t-note" width="26" height="25" viewBox="0 0 26 25"><path d="M1 1h23v17.500h-7.500l-4 4.500-4-4.500H1z" fill="none" stroke="#000" stroke-width="1.600"/></svg>
      <i class="peek"></i>
    </div>
  </footer>
</div>
</body>
</html>
```

FILE: styles.css
```css
* { box-sizing: border-box; margin: 0; padding: 0; }
body { width: 2160px; height: 1440px; overflow: hidden; font-family: "Open Sans", "Noto Sans CJK SC", sans-serif; }
svg { display: block; flex: none; }
button { border: 0; font: inherit; }
i { display: block; flex: none; }
.defs { position: absolute; width: 0; height: 0; }
.icon-text { font-family: "Open Sans", sans-serif; font-weight: 700; }
.browser { width: 2160px; height: 1440px; display: flex; flex-direction: column; background: #d3e3fd; }

/* tab strip */
.tabstrip { height: 73px; display: flex; align-items: center; padding-left: 11px; flex: none; }
.tab-search { width: 50px; height: 50px; border-radius: 18px; background: #e9f0fd; display: grid; place-items: center; }
.tabs { display: flex; margin-left: 26px; width: 1482px; flex: none; }
.tab { width: 105px; height: 29px; display: flex; align-items: center; flex: none; }
.tab:nth-child(-n+6) { width: 106.900px; }
.fav { width: 29px; height: 29px; }
.blue-whale { color: #4d6bfe; }
.black-whale { color: #000; }
.tab-name { width: 24px; height: 29px; margin-left: 15px; line-height: 31px; font-size: 19.500px; color: #474747; overflow: hidden; white-space: nowrap; mask-image: linear-gradient(90deg, #000 45%, transparent); }
.tab::after { content: ""; width: 4px; height: 29px; margin-left: 17px; border-radius: 2px; background: #a8c7fa; }
.no-sep::after { display: none; }
.tab-active { width: 95px; height: 62px; margin: 11px 0 0 -15px; padding: 0 22px 11px 16px; display: flex; align-items: center; justify-content: space-between; background: #fff; border-radius: 18px 18px 0 0; position: relative; flex: none; }
.tab-active::before, .tab-active::after { content: ""; position: absolute; bottom: 0; width: 22px; height: 22px; }
.tab-active::before { left: -22px; background: radial-gradient(circle at 0 0, transparent 21.500px, #fff 22px); }
.tab-active::after { right: -22px; background: radial-gradient(circle at 100% 0, transparent 21.500px, #fff 22px); }
.tabstrip .tab-last { width: 88px; margin-left: 25px; }
.new-tab { margin-left: 18px; }
.win-controls { display: flex; gap: 65px; margin-left: auto; padding-right: 31px; }

/* toolbar */
.toolbar { height: 83px; flex: none; display: flex; align-items: center; background: #fff; border-radius: 14px 14px 0 0; padding: 0 0 1px 28px; }
.nav-icons { display: flex; align-items: center; gap: 41.300px; width: 255px; }
.omnibox { width: 1628px; height: 61px; border-radius: 31px; background: #ebf0f9; display: flex; align-items: center; padding: 0 29px 0 9px; }
.site-info { width: 44px; height: 44px; border-radius: 50%; background: #fff; display: grid; place-items: center; }
.url { margin: -3px auto 0 14px; font-size: 26.450px; color: #1f1f1f; white-space: nowrap; }
.translate { margin-right: 29px; }
.ext { margin-left: 34px; }
.tool-sep { width: 3px; height: 29px; margin: 0 34px 0 30px; background: #d3e3fd; }
.dots { margin-left: 47px; }

/* bookmarks */
.bookmarks { height: 64px; flex: none; display: flex; align-items: center; background: #fff; border-bottom: 2px solid #e1e2e3; padding: 0 55px 11px 34px; font-size: 18.100px; color: #474747; }
.bm-sep { width: 4px; height: 29px; margin: 0 25px 0 27px; border-radius: 2px; background: #d3e3fd; }
.bm { display: flex; align-items: center; gap: 11px; white-space: nowrap; flex: none; }
.bm svg { width: 29px; height: 29px; }
.bm svg.pad { padding: 1px; }
.w119 { width: 119px; } .w145 { width: 145px; } .w105 { width: 105px; } .w156 { width: 154px; } .w124 { width: 124px; }
.w141 { width: 142px; } .w146 { width: 146px; } .w278 { width: 279px; } .w280 { width: 280px; } .w260 { width: 260px; }
.ls-wide { letter-spacing: .32px; }
.more { margin-left: auto; }

/* viewport */
.viewport { height: 1160px; flex: none; display: flex; background: #f9fafc; position: relative; overflow: hidden; }
.page { width: 2135px; height: 1105px; display: flex; gap: 59px; padding: 0 59px 0 58px; }
.banner { position: absolute; top: 0; left: 0; width: 2135px; height: 81px; background: #00417f; border-bottom: 1px solid #164f90; box-shadow: 0 4px 24px rgba(0, 0, 0, .2); display: flex; align-items: center; justify-content: space-between; padding: 0 46px 0 29px; color: #f5f9fc; font-size: 25px; letter-spacing: -.47px; white-space: nowrap; }
.banner p { margin-top: -2px; }
.banner a { font-weight: 600; text-decoration: underline; text-underline-offset: 3px; }

.sidebar { width: 634px; background: #fff; border: 1px solid #e5e7eb; border-top: 0; border-radius: 0 0 14.500px 14.500px; box-shadow: 0 2px 4px rgba(0, 0, 0, .06); padding: 54px 43px 0 44px; }
.side-title { height: 58px; line-height: 58px; margin-bottom: 37px; font-family: "Liberation Serif", "Noto Serif CJK SC", "Noto Sans CJK SC", serif; font-size: 43.600px; font-weight: 400; letter-spacing: -.7px; color: #144b96; }
.list-wrap { display: flex; justify-content: space-between; height: 912px; }
.list { width: 512px; height: 912px; overflow: hidden; display: flex; flex-direction: column; justify-content: flex-end; gap: 29px; }
.card { flex: none; border: 1px solid #e5e7eb; border-radius: 14.500px; background: #fff; padding: 29px; box-shadow: 0 2px 4px rgba(0, 0, 0, .06); }
.card-cut { padding-top: 70px; }
.card-head { display: flex; align-items: flex-start; margin-bottom: 21.500px; }
.card-icon { width: 58.200px; height: 58.200px; margin-top: 3.500px; fill: none; stroke: #144b96; stroke-width: 2; stroke-linecap: round; stroke-linejoin: round; }
.card-names { margin-left: 21px; flex: 1; white-space: nowrap; }
.card-names h3 { font-size: 25.450px; line-height: 36px; font-weight: 700; letter-spacing: -.1px; color: #144b96; }
.card-names p { font-size: 22.300px; line-height: 28.500px; color: #6b7280; }
.card-tags { display: flex; flex-direction: column; align-items: flex-end; gap: 7.300px; }
.tag { width: 82px; height: 38px; line-height: 38px; border-radius: 19px; text-align: center; font-size: 21.800px; font-weight: 600; }
.tag-blue { background: #dbeafe; color: #1e40af; }
.tag-purple { background: #f3e8ff; color: #6b21a8; }
.crown { width: 29px; height: 29px; fill: none; stroke: #ffc107; stroke-width: 2; stroke-linecap: round; stroke-linejoin: round; }
.desc { font-size: 21.800px; line-height: 29.100px; color: #4b5563; margin-bottom: 21.800px; }
.stats { display: flex; justify-content: space-between; font-size: 21.800px; line-height: 29.100px; color: #6b7280; margin-bottom: 21.800px; }
.stats b { color: #144b96; font-weight: 700; }
.stats .green { color: #00a859; }
.choose { display: block; width: 100%; height: 65.450px; border-radius: 10.900px; background: #144b96; color: #fff; font-size: 25.450px; }

.scroll-small { width: 18px; background: #fcfcfc; display: flex; flex-direction: column; align-items: center; padding: 8px 0 7px; }
.up { border: solid transparent; border-top: 0; border-bottom-color: #8b8b8b; }
.down { border: solid transparent; border-bottom: 0; border-top-color: #8b8b8b; }
.scroll-small .up { border-width: 0 6px 7px; }
.scroll-small .down { border-width: 7px 6px 0; margin-top: auto; }
.scroll-small .thumb { width: 10px; height: 355px; border-radius: 5px; background: #8b8b8b; margin-top: 520px; }
.scroll-page { width: 25px; background: #fcfcfc; display: flex; flex-direction: column; align-items: center; padding: 11px 0 9px 2px; }
.scroll-page .up { border-width: 0 8.500px 9px; }
.scroll-page .down { border-width: 9px 8.500px 0; margin-top: auto; }
.scroll-page .thumb { width: 15px; height: 906px; border-radius: 8px; background: #8b8b8b; margin-top: 201px; }

/* chat */
.chat { width: 1326px; background: #fff; border: 1px solid #e5e7eb; border-width: 0 1px 1px; border-radius: 0 0 14.500px 14.500px; box-shadow: 0 2px 4px rgba(0, 0, 0, .06); display: flex; flex-direction: column; }
.chat-head { height: 191.500px; margin: 0 -1px; padding: 17px 44px 0 44px; background: #144b96; color: #fff; display: flex; align-items: center; flex: none; }
.avatar-lg { width: 73px; height: 73px; border-radius: 50%; background: #f5f5f4; color: #144b96; display: grid; place-items: center; }
.chat-names { margin-left: 21px; flex: 1; }
.chat-names h2 { font-size: 43.600px; line-height: 54px; font-weight: 700; margin: -9px 0 3px; }
.chat-names p { font-size: 21.800px; line-height: 29px; color: #d0dbea; }
.quota { display: flex; align-items: center; gap: 15px; font-size: 25.450px; line-height: 38px; color: #c5d2e5; }
.quota b { width: 81px; height: 38px; line-height: 38px; border-radius: 19px; background: #ffc107; color: #144b96; text-align: center; font-size: 21.800px; font-weight: 600; }
.messages { flex: 1; padding: 29px 29px 0 28px; display: flex; flex-direction: column; gap: 29.100px; }
.msg { display: flex; align-items: flex-start; gap: 22px; }
.avatar-sm { width: 58px; height: 58px; border-radius: 50%; background: #f5f5f4; border: 1px dashed #9fb4d6; color: #fff; display: grid; place-items: center; }
.bubble { width: 813px; height: 73px; line-height: 73px; padding-left: 29px; border-radius: 14.500px; background: #f3f4f6; color: #1f2937; font-size: 29.150px; white-space: nowrap; }
.pill { width: 58px; height: 29px; border-radius: 14.500px; background: #f3f4f6; }
.composer { height: 131px; flex: none; border-top: 1px solid #e5e7eb; padding: 29px 28px 0; display: flex; gap: 22px; }
.input { flex: 1; height: 73px; line-height: 73px; border: 1px solid #e5e7eb; border-radius: 11px; padding-left: 22px; font-size: 25.450px; color: #757575; }
.send { width: 87px; height: 73px; border-radius: 11px; background: #8aa5cb; display: grid; place-items: center; }

/* taskbar */
.taskbar { height: 60px; flex: none; display: flex; background: linear-gradient(90deg, #d5d7d9 0, #d3d6da 30%, #d4d5dd 58%, #e0d9df 72%, #e3dbdf 100%); }
.start { width: 73px; display: grid; place-items: center; }
.search { width: 431px; border: 2px solid #ccc; background: #fff; display: flex; align-items: center; padding: 0 0 0 15px; gap: 16px; font-size: 24px; color: #2b2b2b; }
.apps-row { display: flex; margin-left: 1px; width: 1125px; }
.app { width: 75px; position: relative; display: grid; place-items: center; }
.app svg:not([width]) { width: 37px; height: 37px; }
.app:first-child { padding-right: 4px; }
.running::after { content: ""; position: absolute; left: 7px; bottom: 0; width: 61px; height: 3px; background: #484848; }
.running.wide::after { background: linear-gradient(90deg, #484848 49px, #919191 49px); }
.active { background: linear-gradient(90deg, transparent 1px, #edeef0 1px, #edeef0 74px, transparent 74px); }
.active::after { left: 1px; width: 73px; }
.tray { flex: 1; display: flex; align-items: center; margin-left: 118px; }
.ime { width: 24px; height: 24px; border: 1px solid #555; background: #fff; font-size: 20px; line-height: 20px; text-align: center; align-self: flex-start; margin-top: 3px; }
.t-chev { margin-left: 22px; }
.t-mi { margin-left: 14px; margin-top: -3px; }
.t-vol { margin-left: 11px; }
.t-net { margin-left: 12px; }
.t-bat { margin-left: 9px; }
.clock { width: 96px; margin-left: 13px; display: flex; flex-direction: column; text-align: center; font-size: 19.200px; line-height: 28px; color: #111; white-space: nowrap; }
.t-note { margin-left: 28px; }
.peek { width: 1px; height: 60px; background: #aaa; margin-left: auto; margin-right: 6px; }
```
